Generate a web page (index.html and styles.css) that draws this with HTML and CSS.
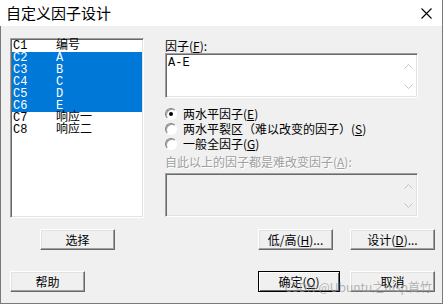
FILE: index.html
```html
<!DOCTYPE html>
<html lang="zh-CN">
<head>
  <meta charset="UTF-8" />
  <title>自定义因子设计</title>
  <link rel="stylesheet" href="styles.css">
</head>
<body>

  <div class="window">
    <div class="titlebar">
      <span class="title">自定义因子设计</span>
      <svg class="close" width="11" height="11" viewBox="0 0 11 11">
        <path d="M0.5 0.5 L10.5 10.5 M10.5 0.5 L0.5 10.5" stroke="#000" stroke-width="1.1" fill="none" />
      </svg>
    </div>

    <div class="main">
      <div class="top">
        <div class="list sunken">
          <div class="row"><span>C1</span><span>编号</span></div>
          <div class="row selected"><span>C2</span><span>A</span></div>
          <div class="row selected"><span>C3</span><span>B</span></div>
          <div class="row selected"><span>C4</span><span>C</span></div>
          <div class="row selected"><span>C5</span><span>D</span></div>
          <div class="row selected"><span>C6</span><span>E</span></div>
          <div class="row"><span>C7</span><span>响应一</span></div>
          <div class="row"><span>C8</span><span>响应二</span></div>
        </div>

        <div class="panel">
          <div class="label">因子(<u>F</u>):</div>
          <div class="field sunken">
            <div class="field-text">A-E</div>
            <div class="scroll">
              <svg width="9" height="5" viewBox="0 0 9 5"><path d="M0.5 4.5 L4.5 0.5 L8.5 4.5" stroke="#c4c4c4" fill="none" /></svg>
              <svg width="9" height="5" viewBox="0 0 9 5"><path d="M0.5 0.5 L4.5 4.5 L8.5 0.5" stroke="#c4c4c4" fill="none" /></svg>
            </div>
          </div>

          <div class="options">
            <div class="option"><span class="radio checked"></span>两水平因子(<u>E</u>)</div>
            <div class="option"><span class="radio"></span>两水平裂区（难以改变的因子）(<u>S</u>)</div>
            <div class="option"><span class="radio"></span>一般全因子(<u>G</u>)</div>
          </div>

          <div class="label disabled">自此以上的因子都是难改变因子(<u>A</u>):</div>
          <div class="field sunken field-disabled">
            <div class="field-text"></div>
            <div class="scroll">
              <svg width="9" height="5" viewBox="0 0 9 5"><path d="M0.5 4.5 L4.5 0.5 L8.5 4.5" stroke="#c4c4c4" fill="none" /></svg>
              <svg width="9" height="5" viewBox="0 0 9 5"><path d="M0.5 0.5 L4.5 4.5 L8.5 0.5" stroke="#c4c4c4" fill="none" /></svg>
            </div>
          </div>
        </div>
      </div>

      <div class="btn-row first">
        <button class="btn btn-select">选择</button>
        <button class="btn btn-lohi">低/高(<u>H</u>)...</button>
        <button class="btn btn-design">设计(<u>D</u>)...</button>
      </div>

      <div class="btn-row second">
        <button class="btn btn-help">帮助</button>
        <button class="btn btn-ok default">确定(<u>O</u>)</button>
        <button class="btn btn-cancel">取消</button>
      </div>

      <div class="watermark">CSDN @Ubuntu之nisp首竹</div>
    </div>
  </div>

</body>
</html>
```

FILE: styles.css
```css
body {
  margin: 0;
  background-color: #ffffff;
  font-family: "Noto Sans CJK SC", "Liberation Sans", sans-serif;
  font-size: 12px;
  color: #000;
}

.window {
  width: 443px;
  height: 304px;
  box-sizing: border-box;
  border-right: 1px solid #7a7a7a;
  position: relative;
}

.titlebar {
  height: 26px;
  display: flex;
  align-items: center;
  justify-content: space-between;
  padding: 0 10px 0 6px;
  background-color: #ffffff;
}

.title {
  font-size: 15px;
  line-height: 26px;
}

.main {
  position: relative;
  height: 278px;
  box-sizing: border-box;
  background-color: #f0f0f0;
  border-left: 1px solid #7a7a7a;
  border-bottom: 1px solid #7a7a7a;
  padding: 12px 7px 0 9px;
}

.sunken {
  box-sizing: border-box;
  border: 1px solid;
  border-color: #a0a0a0 #ffffff #ffffff #a0a0a0;
  box-shadow: inset 1px 1px 0 #696969, inset -1px -1px 0 #e3e3e3;
}

.top {
  display: flex;
  gap: 21px;
}

.list {
  width: 134px;
  height: 180px;
  background-color: #ffffff;
  padding: 1px 1px 0 2px;
}

.row {
  display: grid;
  grid-template-columns: 43px 1fr;
  height: 12px;
  line-height: 12px;
  font-family: "Liberation Mono", "Noto Sans CJK SC", monospace;
  font-size: 12px;
  padding-left: 1px;
  margin-left: -1px;
}

.row.selected {
  background-color: #0078d7;
  color: #ffffff;
}

.panel {
  width: 253px;
  display: flex;
  flex-direction: column;
}

.label {
  line-height: 15px;
  height: 15px;
}

.label.disabled {
  color: #a0a0a0;
  text-shadow: 1px 1px 0 #ffffff;
  margin-top: 4px;
  height: 14px;
  line-height: 14px;
}

.field {
  display: flex;
  height: 45px;
  background-color: #ffffff;
}

.field-disabled {
  margin-top: 4px;
  height: 44px;
  background-color: #f0f0f0;
}

.field-text {
  flex: 1;
  padding: 3px 0 0 2px;
  font-family: "Liberation Mono", "Noto Sans CJK SC", monospace;
  line-height: 12px;
}

.scroll {
  width: 17px;
  display: flex;
  flex-direction: column;
  justify-content: space-between;
  align-items: center;
  padding: 10px 0 8px;
}

.options {
  margin-top: 8px;
}

.option {
  display: flex;
  align-items: center;
  height: 15px;
  line-height: 15px;
}

.radio {
  width: 12px;
  height: 12px;
  box-sizing: border-box;
  border-radius: 50%;
  border: 1px solid;
  border-color: #808080 #ffffff #ffffff #808080;
  background-color: #ffffff;
  box-shadow: inset 1px 1px 0 #a0a0a0;
  margin-right: 6px;
  display: flex;
  align-items: center;
  justify-content: center;
}

.radio.checked::after {
  content: "";
  width: 4px;
  height: 4px;
  border-radius: 50%;
  background-color: #000;
}

.btn-row {
  display: flex;
  height: 21px;
}

.btn-row.first {
  margin-top: 11px;
}

.btn-row.second {
  margin-top: 21px;
}

.btn {
  height: 21px;
  box-sizing: border-box;
  padding: 0;
  font-family: "Noto Sans CJK SC", "Liberation Sans", sans-serif;
  font-size: 12px;
  color: #000;
  background-color: #f0f0f0;
  border: 1px solid;
  border-color: #ffffff #696969 #696969 #ffffff;
  box-shadow: inset -1px -1px 0 #a0a0a0, inset 1px 1px 0 #e3e3e3;
}

.btn.default {
  border-color: #000;
  box-shadow: inset 1px 1px 0 #ffffff, inset -1px -1px 0 #696969;
}

.btn-select { width: 75px; margin-left: 30px; }
.btn-lohi { width: 75px; margin-left: auto; }
.btn-design { width: 85px; margin-left: 17px; }
.btn-help { width: 75px; }
.btn-ok { width: 82px; margin-left: auto; }
.btn-cancel { width: 85px; margin-left: 10px; }

.watermark {
  position: absolute;
  right: 10px;
  bottom: 8px;
  font-size: 12px;
  color: rgba(150, 150, 150, 0.7);
}
```
